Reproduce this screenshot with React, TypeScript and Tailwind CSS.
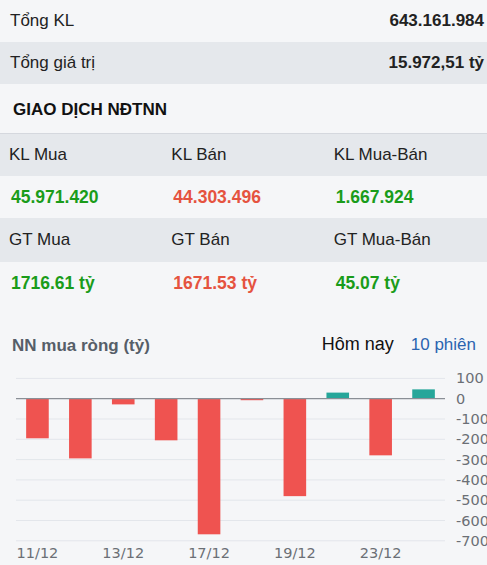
import React from 'react'

const font = { fontFamily: '"Liberation Sans", Arial, sans-serif' }
const axisFont = { fontFamily: '"DejaVu Sans", sans-serif' }

const bars = [-195, -294, -28, -205, -668, -5, -480, 30, -279, 46]
const xLabels = [
  { i: 0, t: '11/12' },
  { i: 2, t: '13/12' },
  { i: 4, t: '17/12' },
  { i: 6, t: '19/12' },
  { i: 8, t: '23/12' },
]

function Chart() {
  const left = 16
  const right = 445
  const slot = (right - left) / bars.length
  const zero = 32.7
  const k = 0.203
  const y = (v: number) => zero - v * k
  const ticks = [100, 0, -100, -200, -300, -400, -500, -600, -700]

  return (
    <svg width={487} height={200} className="block">
      {ticks.map((t) =>
        t === 0 ? null : (
          <line key={t} x1={left} x2={right} y1={y(t)} y2={y(t)} stroke="#e3e6eb" strokeWidth={1} />
        )
      )}
      {bars.map((v, i) => {
        const cx = left + slot * i + slot / 2
        const w = 22.6
        const top = v >= 0 ? y(v) : zero
        const h = Math.max(Math.abs(v) * k, 1.5)
        return (
          <rect
            key={i}
            x={cx - w / 2}
            y={top}
            width={w}
            height={h}
            fill={v >= 0 ? '#26a69a' : '#ef5350'}
          />
        )
      })}
      <line x1={left} x2={right} y1={zero} y2={zero} stroke="#8a8f96" strokeWidth={1.2} />
      {ticks.map((t) => (
        <text key={t} x={456} y={y(t) + 5} fontSize={14.5} fill="#6b6f75" style={axisFont}>
          {t}
        </text>
      ))}
      {xLabels.map((l) => (
        <text
          key={l.t}
          x={left + slot * l.i + slot / 2}
          y={192}
          fontSize={14.5}
          fill="#6b6f75"
          textAnchor="middle"
          style={axisFont}
        >
          {l.t}
        </text>
      ))}
    </svg>
  )
}

function StatRow({ label, value, dark }: { label: string; value: string; dark?: boolean }) {
  return (
    <div
      className={`h-[42px] flex items-center justify-between pl-[10px] pr-[3px] ${
        dark ? 'bg-[#e5e8ec]' : 'bg-[#f5f6f8]'
      }`}
    >
      <span className="text-[17px] text-[#222]">{label}</span>
      <span className="text-[17px] font-bold text-[#222]">{value}</span>
    </div>
  )
}

export default function App() {
  const cols = 'grid grid-cols-3'
  return (
    <div className="w-[487px] h-[565px] bg-[#f5f6f8] overflow-hidden" style={font}>
      <StatRow label="Tổng KL" value="643.161.984" />
      <StatRow label="Tổng giá trị" value="15.972,51 tỷ" dark />

      <div className="h-[50px] flex items-center pl-[13px] pt-[2px] border-b border-[#d5d8de]">
        <span className="text-[17px] font-bold text-[#111]">GIAO DỊCH NĐTNN</span>
      </div>

      {/* KL */}
      <div className={`${cols} h-[42px] items-center bg-[#e5e8ec] text-[17px] text-[#222]`}>
        <span className="pl-[9px]">KL Mua</span>
        <span className="pl-[9px]">KL Bán</span>
        <span className="pl-[9px]">KL Mua-Bán</span>
      </div>
      <div className={`${cols} h-[42px] items-center text-[17.5px] font-bold`}>
        <span className="pl-[11px] text-[#1a9c1a]">45.971.420</span>
        <span className="pl-[11px] text-[#e5533f]">44.303.496</span>
        <span className="pl-[11px] text-[#1a9c1a]">1.667.924</span>
      </div>

      {/* GT */}
      <div className={`${cols} h-[44px] items-center bg-[#e5e8ec] text-[17px] text-[#222]`}>
        <span className="pl-[9px]">GT Mua</span>
        <span className="pl-[9px]">GT Bán</span>
        <span className="pl-[9px]">GT Mua-Bán</span>
      </div>
      <div className={`${cols} h-[42px] items-center text-[17.5px] font-bold`}>
        <span className="pl-[11px] text-[#1a9c1a]">1716.61 tỷ</span>
        <span className="pl-[11px] text-[#e5533f]">1671.53 tỷ</span>
        <span className="pl-[11px] text-[#1a9c1a]">45.07 tỷ</span>
      </div>

      {/* Chart */}
      <div className="h-[62px] flex items-end justify-between pl-[12px] pr-[11px] pb-[8px]">
        <span className="text-[17px] font-bold text-[#565e68]">NN mua ròng (tỷ)</span>
        <div className="flex items-baseline gap-[17px]">
          <span className="text-[18px] text-[#111]">Hôm nay</span>
          <span className="text-[17px] text-[#2a64b0]">10 phiên</span>
        </div>
      </div>
      <Chart />
    </div>
  )
}
